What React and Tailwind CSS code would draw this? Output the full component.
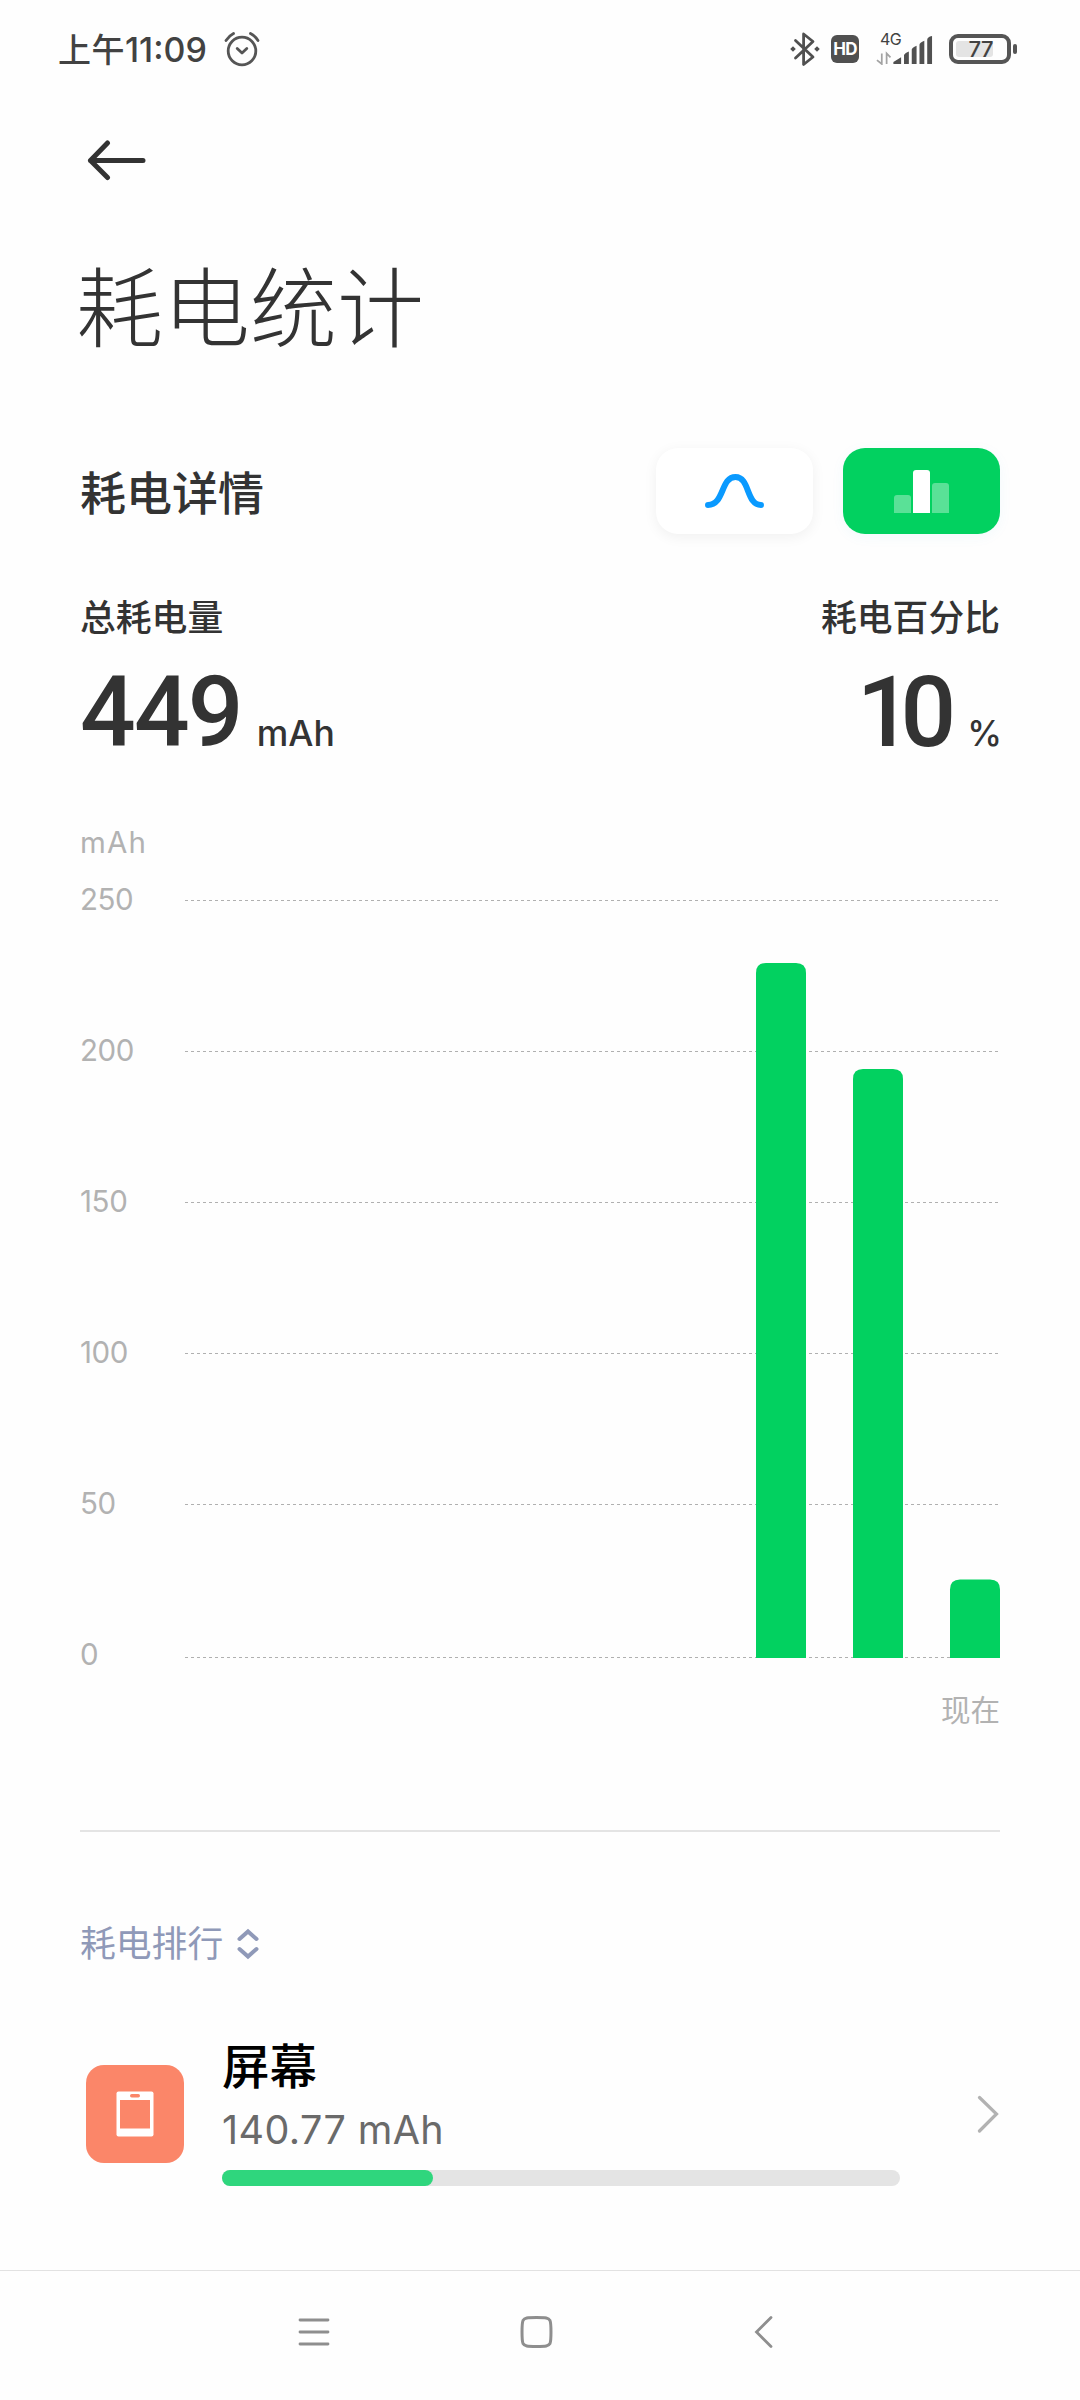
import { useState } from 'react';

const MAX = 250;
const TICKS = [250, 200, 150, 100, 50, 0];

const bars = [
  { x: 676, top: 63 },
  { x: 773, top: 169 },
  { x: 870, top: 679.5 },
];

const gridLines = [0, 151, 302, 453, 604, 757];

const apps = [{ name: '屏幕', usage: '140.77 mAh', percent: 31.1 }];

function StatusBar() {
  return (
    <div className="flex h-[98px] items-center justify-between pl-[58px] pr-[63px] text-[#424242]">
      <div className="flex items-center">
        <span className="mt-px text-[33px] font-medium leading-[40px] tracking-[0.5px]">上午</span>
        <span className="mt-px text-[34px] font-medium leading-[40px]">11:09</span>
        <svg className="ml-[17px]" width="36" height="36" viewBox="0 0 36 36" fill="none" stroke="#555" strokeWidth="2.8" strokeLinecap="round">
          <circle cx="18" cy="20" r="13.8" />
          <path d="M2 9.5C4 6.500 6.500 4 9.500 2.500M26.500 2.500C29.500 4 32 6.500 34 9.500" />
          <path d="M13.200 17.500L18 22L22.800 17.500" strokeLinejoin="round" />
        </svg>
      </div>
      <div className="flex items-center">
        <svg width="30" height="36" viewBox="0 0 30 36" fill="none" stroke="#505050" strokeWidth="2.8" strokeLinejoin="round" strokeLinecap="round">
          <path d="M5.500 9.500L23 26L13.600 33.500V3L23 10.500L5.500 27" />
          <path d="M3 15.200L5.800 18L3 20.800L0.200 18ZM27 15.200L29.800 18L27 20.800L24.200 18Z" fill="#505050" stroke="none" />
        </svg>
        <div className="ml-[11px] flex h-7 w-7 items-center justify-center rounded-[6px] bg-[#505050] text-[17px] font-bold leading-none tracking-[-0.8px] text-white">
          HD
        </div>
        <div className="ml-[17px] flex h-[32px] w-[57px] flex-col">
          <span className="pl-[4px] text-[16px] leading-[12px] tracking-[-0.5px]">4G</span>
          <svg className="-mt-[9px]" width="57" height="30" viewBox="0 0 57 30">
            <path d="M0 25L5 29V18M10 29V18L14 22" fill="none" stroke="#a3a3a3" strokeWidth="1.8" />
            <path d="M17 29V27L25 22V29ZM28 29V20Q28 18 33 16V29ZM36 29V14Q36 12 41 10V29ZM44 29V9Q44 7 49 5V29ZM52 29V4Q52 1 57 0V29Z" fill="#505050" />
          </svg>
        </div>
        <div className="ml-[16px] flex h-[30px] w-[62px] items-center rounded-[9px] border-4 border-[#555] p-[3px]">
          <div className="flex h-4 w-[37px] items-center justify-end rounded-[3px] bg-[#e4e4e4]">
            <span className="text-[22px] font-medium leading-none tracking-[-0.5px]">77</span>
          </div>
        </div>
        <div className="ml-[2px] h-[10px] w-[4px] rounded-[2px] bg-[#555]" />
      </div>
    </div>
  );
}

function ModeSwitch({ mode, onChange }) {
  return (
    <div className="flex gap-[30px]">
      <button
        type="button"
        aria-label="curve"
        onClick={() => onChange('curve')}
        className="flex h-[86px] w-[157px] items-center justify-center rounded-[22px] bg-white shadow-[0_3px_14px_rgba(0,0,0,0.06)]"
      >
        <svg width="60" height="36" viewBox="0 0 60 36" fill="none" stroke="#0a9aff" strokeWidth="6" strokeLinecap="round">
          <path d="M3 32C19.500 32 15.500 4 30.500 4C45 4 41 32 56 32" />
        </svg>
      </button>
      <button
        type="button"
        aria-label="bar"
        aria-pressed={mode === 'bar'}
        onClick={() => onChange('bar')}
        className="flex h-[86px] w-[157px] items-center justify-center rounded-[22px] bg-[#02d160] shadow-[0_3px_14px_rgba(2,160,209,0.05)]"
      >
        <div className="flex items-end gap-[2px]">
          <div className="h-[18px] w-[17px] rounded-t-[3px] bg-white/35" />
          <div className="h-[43px] w-[17px] rounded-t-[3px] bg-white" />
          <div className="h-[30px] w-[17px] rounded-t-[3px] bg-white/35" />
        </div>
      </button>
    </div>
  );
}

function Chart() {
  return (
    <div className="text-[29.500px] text-[#b2b2b2]">
      <p className="leading-[40px] tracking-[1.2px]">mAh</p>
      <div className="mt-[17px] flex h-[777px]">
        <div className="flex w-[105px] shrink-0 flex-col">
          {TICKS.map((tick) => (
            <span key={tick} className="h-[151px] shrink-0 leading-[40px] tracking-[-0.4px]">{tick}</span>
          ))}
        </div>
        <svg className="mt-[21px] shrink-0" width="815" height="758" viewBox="105 0 815 758" role="img" aria-label={`0-${MAX} mAh`}>
          {gridLines.map((y) => (
            <line key={y} x1="105" x2="918" y1={y + 0.5} y2={y + 0.5} stroke="#b0b0b0" strokeWidth="1" strokeDasharray="3 3" />
          ))}
          {bars.map((bar) => (
            <path
              key={bar.x}
              d={`M${bar.x} 758V${bar.top + 10}q0 -10 10 -10h30q10 0 10 10V758Z`}
              fill="#02d160"
            />
          ))}
        </svg>
      </div>
      <p className="mt-[34px] text-right text-[29.500px] leading-[40px]">现在</p>
    </div>
  );
}

function AppRow({ app }) {
  return (
    <div className="flex items-center">
      <div className="ml-[6px] mt-[4px] flex h-[98px] w-[98px] items-center justify-center rounded-[18px] bg-[#fb8669]">
        <svg width="38" height="46" viewBox="0 0 38 46">
          <rect x="0.500" y="0.500" width="37" height="45" rx="2" fill="#fff" />
          <rect x="14" y="3" width="10" height="3.500" rx="1.700" fill="#fb8669" />
          <rect x="4" y="9" width="30" height="28.500" fill="#fb8669" />
        </svg>
      </div>
      <div className="ml-[38px] w-[678px]">
        <p className="text-[47.500px] font-medium leading-[60px] text-black">{app.name}</p>
        <p className="mt-[5px] text-[39.500px] leading-[56px] tracking-[0.4px] text-[#6a6a6a]">{app.usage}</p>
        <div className="mt-[12px] h-4 rounded-full bg-[#e4e4e4]">
          <div className="h-4 rounded-full bg-[#2fd67d]" style={{ width: `${app.percent}%` }} />
        </div>
      </div>
      <svg className="ml-[77px] mt-[4px]" width="22" height="38" viewBox="0 0 22 38" fill="none" stroke="#b2b2b2" strokeWidth="3.200" strokeLinecap="round">
        <path d="M2.500 2.500L19.500 19L2.500 36" />
      </svg>
    </div>
  );
}

function NavBar() {
  return (
    <div className="flex h-[130px] shrink-0 border-t border-[#e2e2e2]">
      <svg className="ml-[298px] mt-[45px]" width="32" height="32" viewBox="0 0 32 32" stroke="#8e8e8e" strokeWidth="2.800" strokeLinecap="round">
        <path d="M2 4H30M2 16H30M2 28H30" />
      </svg>
      <svg className="ml-[190px] mt-[45px]" width="33" height="32" viewBox="0 0 33 32" fill="none" stroke="#8e8e8e" strokeWidth="3">
        <path d="M16.500 1.600C26 1.600 28.500 1.800 30 4.500C31.300 7.500 31.300 24.500 30 27.500C28.500 30.200 26 30.400 16.500 30.400C7 30.400 4.500 30.200 3 27.500C1.700 24.500 1.700 7.500 3 4.500C4.500 1.800 7 1.600 16.500 1.600Z" />
      </svg>
      <svg className="ml-[201px] mt-[45px]" width="20" height="32" viewBox="0 0 20 32" fill="none" stroke="#8e8e8e" strokeWidth="2.800" strokeLinecap="round">
        <path d="M17 1.500L2.500 16L17 30.500" />
      </svg>
    </div>
  );
}

export default function App() {
  const [mode, setMode] = useState('bar');

  return (
    <div className="flex h-[2400px] w-[1080px] flex-col overflow-hidden bg-[#fefefe] font-['Inter','Noto_Sans_CJK_SC',sans-serif] text-[#333]">
      <StatusBar />

      <main className="flex-1 px-20">
        <svg className="ml-[6px] mt-[41px]" width="62" height="42" viewBox="0 0 62 42" fill="none" stroke="#333" strokeWidth="5" strokeLinecap="round" strokeLinejoin="round">
          <path d="M57 21.500H4.500M21.500 4L4.500 21.500L21.500 38.500" />
        </svg>
        <h1 className="-ml-[4px] mt-[69px] text-[87px] font-light leading-[120px]">耗电统计</h1>

        <div className="mt-[78px] flex items-center justify-between">
          <h2 className="mt-[3px] text-[46px] font-medium leading-[60px]">耗电详情</h2>
          <ModeSwitch mode={mode} onChange={setMode} />
        </div>

        {/* Totaux */}
        <div className="mt-[60px] flex justify-between text-[35.800px] font-medium leading-[48px]">
          <span>总耗电量</span>
          <span>耗电百分比</span>
        </div>
        <div className="mt-[11px] flex h-[120px] justify-between font-medium leading-[120px]">
          <p className="flex items-baseline">
            <span className="font-['Roboto'] text-[98px] tracking-[-1.8px]">449</span>
            <span className="ml-[15px] text-[35.500px]">mAh</span>
          </p>
          <p className="-mr-[2px] flex items-baseline">
            <span className="font-['Roboto'] text-[98px] tracking-[-12px]">10</span>
            <span className="ml-[23px] text-[35px]">%</span>
          </p>
        </div>

        <div className="mt-[49px]">
          <Chart />
        </div>

        <div className="mt-[100px] h-[2px] bg-[#e4e4e4]" />

        <div className="mt-[86px] flex items-center text-[#8f99b8]">
          <span className="text-[35.800px] leading-[52px]">耗电排行</span>
          <svg className="ml-[14px]" width="22" height="32" viewBox="0 0 22 32" fill="none" stroke="#8f99b8" strokeWidth="4" strokeLinecap="round">
            <path d="M2.500 11L11 3.500L19.500 11M2.500 21L11 28.500L19.500 21" />
          </svg>
        </div>

        <div className="mt-[67px]">
          {apps.map((app) => (
            <AppRow key={app.name} app={app} />
          ))}
        </div>
      </main>

      <NavBar />
    </div>
  );
}
